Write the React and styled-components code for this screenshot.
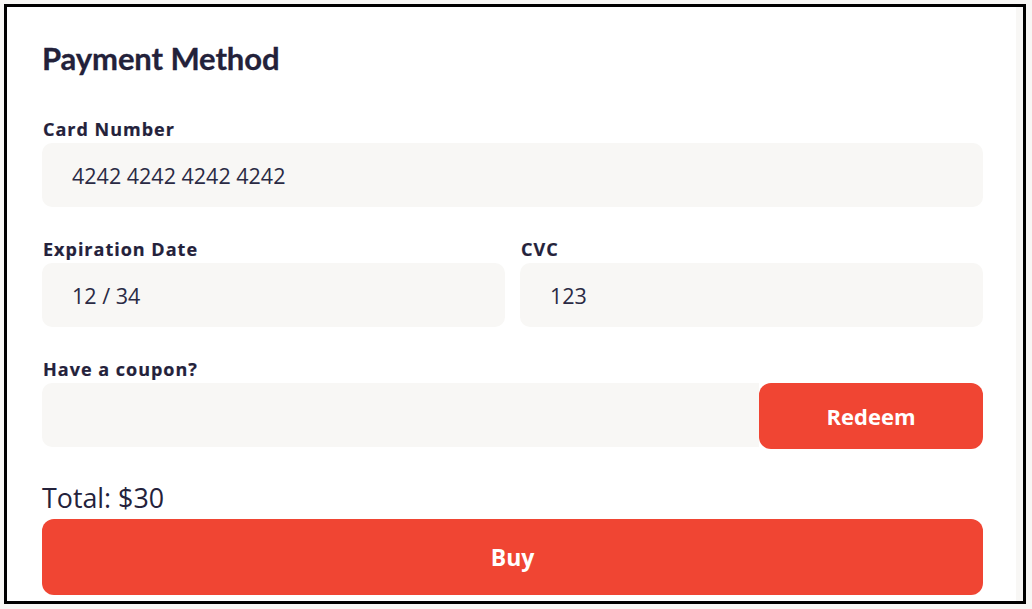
import React from 'react'
import styled, {createGlobalStyle} from 'styled-components'

const GlobalStyle = createGlobalStyle`
body {
  margin: 0;
  background: #f8f7f5;
  font-family: "Open Sans", "Liberation Sans", sans-serif;
  color: #24223b;
}
`

function App() {
    return (
        <>
            <GlobalStyle />
            <Frame>
                <Content>
                    <Heading>Payment Method</Heading>

                    <Field>
                        <Label>Card Number</Label>
                        <Input>4242 4242 4242 4242</Input>
                    </Field>

                    <Row>
                        <Field $grow>
                            <Label>Expiration Date</Label>
                            <Input>12 / 34</Input>
                        </Field>
                        <Field $grow>
                            <Label>CVC</Label>
                            <Input>123</Input>
                        </Field>
                    </Row>

                    <Field>
                        <Label>Have a coupon?</Label>
                        <CouponRow>
                            <Input $joined />
                            <RedeemButton>Redeem</RedeemButton>
                        </CouponRow>
                    </Field>

                    <Total>Total: $30</Total>
                    <BuyButton>Buy</BuyButton>
                </Content>
                <ScrollTrack />
            </Frame>
        </>
    )
}

export default App

const Frame = styled.div`
box-sizing: border-box;
margin: 4px 6px 4px 4px;
height: 600px;
border: 3px solid #000;
display: flex;
overflow: hidden;
`

const Content = styled.div`
flex: 1;
background: #fff;
padding: 33px 33px 0 35px;
display: flex;
flex-direction: column;
`

const ScrollTrack = styled.div`
width: 7px;
background: #f8f7f5;
`

const Heading = styled.h1`
margin: 0 0 41px;
font-family: Lato, "Open Sans", sans-serif;
font-weight: 700;
font-size: 31px;
line-height: 36px;
letter-spacing: -0.1px;
color: #23213a;
-webkit-text-stroke: 0.3px #23213a;
`

const Field = styled.div`
flex: ${p => p.$grow ? 1 : 'none'};
display: flex;
flex-direction: column;
margin-bottom: 30px;
`

const Label = styled.label`
font-weight: 700;
font-size: 18px;
line-height: 24px;
letter-spacing: 1px;
margin: 0 0 2px 1px;
-webkit-text-stroke: 0.2px #24223b;
`

const Input = styled.div`
box-sizing: border-box;
height: 64px;
flex: ${p => p.$joined ? 1 : 'none'};
display: flex;
align-items: center;
padding: 0 30px;
background: #f8f7f5;
border-radius: ${p => p.$joined ? '10px 0 0 10px' : '10px'};
font-size: 21.5px;
color: #2a2a44;
`

const Row = styled.div`
display: flex;
gap: 15px;
`

const CouponRow = styled.div`
display: flex;
align-items: flex-start;
`

const RedeemButton = styled.button`
width: 224px;
height: 66px;
border: none;
border-radius: 12px;
background: #f04533;
color: #fff;
font-family: "Open Sans", sans-serif;
font-weight: 700;
font-size: 22px;
cursor: pointer;
`

const Total = styled.div`
margin-top: 3px;
font-size: 26.8px;
line-height: 32px;
`

const BuyButton = styled.button`
margin-top: 5px;
height: 76px;
border: none;
border-radius: 12px;
background: #f04533;
color: #fff;
font-family: "Open Sans", sans-serif;
font-weight: 700;
font-size: 23px;
cursor: pointer;
`
